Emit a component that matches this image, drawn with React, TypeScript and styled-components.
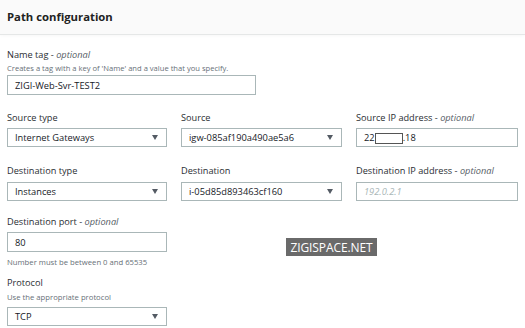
import React from "react";
import styled, { createGlobalStyle } from "styled-components";

const Global = createGlobalStyle`
  html, body { margin: 0; padding: 0; background: #ffffff; }
  body { font-family: "Open Sans", "Noto Sans", sans-serif; color: #16191f; }
`;

const Page = styled.div`
  width: 525px;
  height: 328px;
  overflow: hidden;
  position: relative;
  background: #fff;
`;

const Header = styled.div`
  height: 35px;
  box-sizing: border-box;
  background: #fafafa;
  border-bottom: 1px solid #e5e7e7;
  box-shadow: 0 1px 3px rgba(0, 0, 0, 0.03);
  display: flex;
  align-items: center;
  padding: 0 7px 2px;
`;

const Title = styled.h2`
  margin: 0;
  font-size: 11.3px;
  font-weight: 700;
  color: #222;
`;

const Body = styled.div`
  padding: 14px 7px 0;
  display: flex;
  flex-direction: column;
`;

const Field = styled.div<{ $mt?: number; $w?: number }>`
  display: flex;
  flex-direction: column;
  margin-top: ${(p) => p.$mt ?? 0}px;
  width: ${(p) => (p.$w ? `${p.$w}px` : "auto")};
`;

const Label = styled.div`
  font-size: 9.2px;
  line-height: 12px;
  height: 12px;
  color: #2a2e33;
  white-space: nowrap;
  em { font-style: italic; color: #545b64; }
`;

const Desc = styled.div<{ $size: number; $mt?: number }>`
  font-size: ${(p) => p.$size}px;
  line-height: 12px;
  height: 12px;
  margin-top: ${(p) => p.$mt ?? 0}px;
  color: #687078;
  white-space: nowrap;
`;

const Row = styled.div<{ $mt: number }>`
  display: grid;
  grid-template-columns: 160px 161px 162px;
  column-gap: 14px;
  margin-top: ${(p) => p.$mt}px;
`;

const Box = styled.div<{ $mt: number; $h?: number }>`
  box-sizing: border-box;
  height: ${(p) => p.$h ?? 19}px;
  margin-top: ${(p) => p.$mt}px;
  border: 1px solid #aab7b8;
  background: #fff;
  display: flex;
  align-items: center;
  padding: 0 6px 0 7px;
  font-size: 9.3px;
  color: #16191f;
  white-space: nowrap;
  overflow: hidden;
`;

const Value = styled.span`
  flex: 1;
`;

const Placeholder = styled.span`
  font-style: italic;
  color: #aab7b8;
`;

const Caret = styled.span`
  width: 0;
  height: 0;
  border-left: 3.5px solid transparent;
  border-right: 3.5px solid transparent;
  border-top: 5px solid #545b64;
  margin-right: 2px;
`;

const Redact = styled.span`
  display: inline-block;
  width: 28px;
  height: 11px;
  box-sizing: border-box;
  border: 1.5px solid #555;
  background: #fff;
  vertical-align: middle;
`;

const Watermark = styled.div`
  position: absolute;
  left: 286px;
  top: 238px;
  width: 91px;
  height: 18px;
  background: #6a6a6a;
  color: #ffffff;
  font-size: 12px;
  display: flex;
  align-items: center;
  justify-content: center;
  letter-spacing: -0.1px;
`;

const Select = ({ value, mt }: { value: string; mt: number }) => (
  <Box $mt={mt}>
    <Value>{value}</Value>
    <Caret />
  </Box>
);

export default function App() {
  return (
    <Page>
      <Global />
      <Header>
        <Title>Path configuration</Title>
      </Header>
      <Body>
        <Field $w={249}>
          <Label>
            Name tag - <em>optional</em>
          </Label>
          <Desc $size={7.6} $mt={1}>
            Creates a tag with a key of 'Name' and a value that you specify.
          </Desc>
          <Box $mt={1} $h={20}>
            <Value>ZIGI-Web-Svr-TEST2</Value>
          </Box>
        </Field>
        <Row $mt={17}>
          <Field>
            <Label>Source type</Label>
            <Select value="Internet Gateways" mt={4} />
          </Field>
          <Field>
            <Label>Source</Label>
            <Select value="igw-085af190a490ae5a6" mt={4} />
          </Field>
          <Field>
            <Label>
              Source IP address - <em>optional</em>
            </Label>
            <Box $mt={4}>
              <Value>
                22<Redact />.18
              </Value>
            </Box>
          </Field>
        </Row>
        <Row $mt={18}>
          <Field>
            <Label>Destination type</Label>
            <Select value="Instances" mt={5} />
          </Field>
          <Field>
            <Label>Destination</Label>
            <Select value="i-05d85d893463cf160" mt={5} />
          </Field>
          <Field>
            <Label>
              Destination IP address - <em>optional</em>
            </Label>
            <Box $mt={5}>
              <Placeholder>192.0.2.1</Placeholder>
            </Box>
          </Field>
        </Row>
        <Field $mt={15} $w={160}>
          <Label>
            Destination port - <em>optional</em>
          </Label>
          <Box $mt={4} $h={20}>
            <Value>80</Value>
          </Box>
          <Desc $size={7.7} $mt={4}>
            Number must be between 0 and 65535
          </Desc>
        </Field>
        <Field $mt={9} $w={160}>
          <Label>Protocol</Label>
          <Desc $size={7.7} $mt={2}>
            Use the appropriate protocol
          </Desc>
          <Box $mt={4}>
            <Value>TCP</Value>
            <Caret />
          </Box>
        </Field>
      </Body>
      <Watermark>ZIGISPACE.NET</Watermark>
    </Page>
  );
}
